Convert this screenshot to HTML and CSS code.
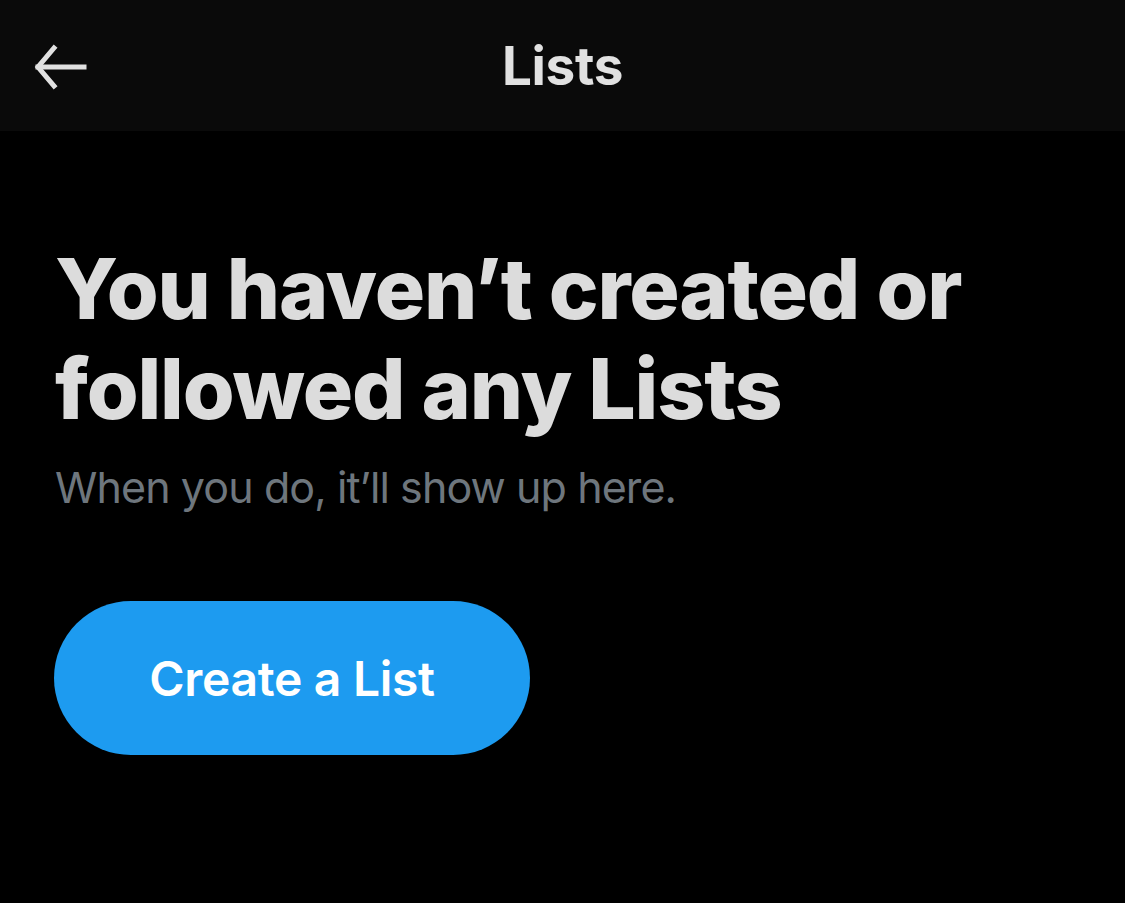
FILE: index.html
```html
<!DOCTYPE html>
<html lang="en">
<head>
<meta charset="utf-8">
<title>Lists</title>
<link rel="stylesheet" href="styles.css">
</head>
<body>
<div class="app">
  <header class="topbar">
    <button class="back" aria-label="Back">
      <svg width="54" height="46" viewBox="0 0 54 46" fill="none" stroke="#e1e1e1" stroke-width="5" stroke-linecap="square">
        <path d="M4 23 H50"/>
        <path d="M20 4 L4 23 L20 42" stroke-linejoin="miter"/>
      </svg>
    </button>
    <h1 class="title">Lists</h1>
  </header>
  <main class="empty">
    <h2 class="headline">You haven’t created or followed any Lists</h2>
    <p class="sub">When you do, it’ll show up here.</p>
    <button class="cta">Create a List</button>
  </main>
</div>
</body>
</html>
```
FILE: styles.css
```css
html, body {
  margin: 0;
  padding: 0;
  background: #000;
}
body {
  font-family: Inter, "Noto Sans", "Liberation Sans", sans-serif;
  color: #dedede;
}
.app {
  width: 1125px;
  height: 903px;
  background: #000;
}
.topbar {
  height: 131px;
  background: #0a0a0a;
  display: flex;
  align-items: center;
  justify-content: center;
  position: relative;
}
.back {
  position: absolute;
  left: 34px;
  top: 44px;
  background: none;
  border: 0;
  padding: 0;
  width: 54px;
  height: 46px;
}
.back svg { display: block; }
.title {
  margin: 0;
  font-size: 53px;
  font-weight: 700;
  letter-spacing: -0.3px;
  color: #e1e1e1;
  line-height: 1;
  padding-top: 2px;
}
.empty {
  padding: 108px 0 0 55px;
  display: flex;
  flex-direction: column;
  align-items: flex-start;
}
.headline {
  margin: 0;
  width: 960px;
  font-size: 84px;
  font-weight: 800;
  line-height: 100px;
  letter-spacing: -1.2px;
  color: #dcdcdc;
}
.sub {
  margin: 20px 0 0 0;
  font-size: 43px;
  font-weight: 400;
  line-height: 56px;
  color: #6e767d;
  letter-spacing: -0.9px;
}
.cta {
  margin-top: 86px;
  margin-left: -1px;
  width: 476px;
  height: 154px;
  border: 0;
  border-radius: 77px;
  background: #1d9bf0;
  color: #fff;
  font-family: Inter, "Noto Sans", "Liberation Sans", sans-serif;
  font-size: 48px;
  font-weight: 600;
  letter-spacing: -0.3px;
  padding: 0;
}
```
